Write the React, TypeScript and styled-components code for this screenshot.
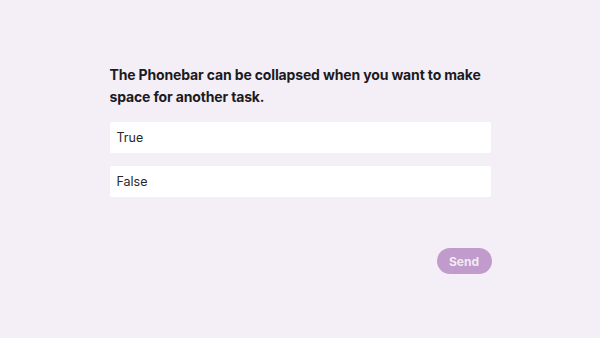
import React from "react";
import styled, { createGlobalStyle } from "styled-components";

const GlobalStyle = createGlobalStyle`
  html, body {
    margin: 0;
    padding: 0;
    background: #f4eff6;
    font-family: Inter, "Noto Sans", sans-serif;
  }
`;

const Page = styled.div`
  width: 600px;
  height: 338px;
  display: flex;
  justify-content: center;
  padding-top: 64px;
  box-sizing: border-box;
`;

const Quiz = styled.div`
  width: 381px;
  display: flex;
  flex-direction: column;
`;

const Question = styled.h2`
  margin: 0 0 14px;
  font-size: 14px;
  font-weight: 700;
  line-height: 22px;
  color: #1c1a1e;
  letter-spacing: -0.15px;
`;

const Options = styled.div`
  display: flex;
  flex-direction: column;
  gap: 13px;
`;

const Option = styled.button`
  height: 31px;
  border: none;
  border-radius: 2px;
  background: #ffffff;
  padding: 0 7px;
  text-align: left;
  font-family: inherit;
  font-size: 12.5px;
  color: #2a282c;
  cursor: pointer;
`;

const Footer = styled.div`
  display: flex;
  justify-content: flex-end;
  margin-top: 51px;
`;

const SendButton = styled.button`
  width: 55px;
  height: 26px;
  margin-right: -1px;
  border: none;
  border-radius: 13px;
  background: #c09bcc;
  color: #f3e9f5;
  font-family: inherit;
  font-size: 12px;
  font-weight: 700;
`;

const App = () => {
  return (
    <>
      <GlobalStyle />
      <Page>
        <Quiz>
          <Question>
            The Phonebar can be collapsed when you want to make space for
            another task.
          </Question>
          <Options>
            <Option>True</Option>
            <Option>False</Option>
          </Options>
          <Footer>
            <SendButton disabled>Send</SendButton>
          </Footer>
        </Quiz>
      </Page>
    </>
  );
};

export default App;
